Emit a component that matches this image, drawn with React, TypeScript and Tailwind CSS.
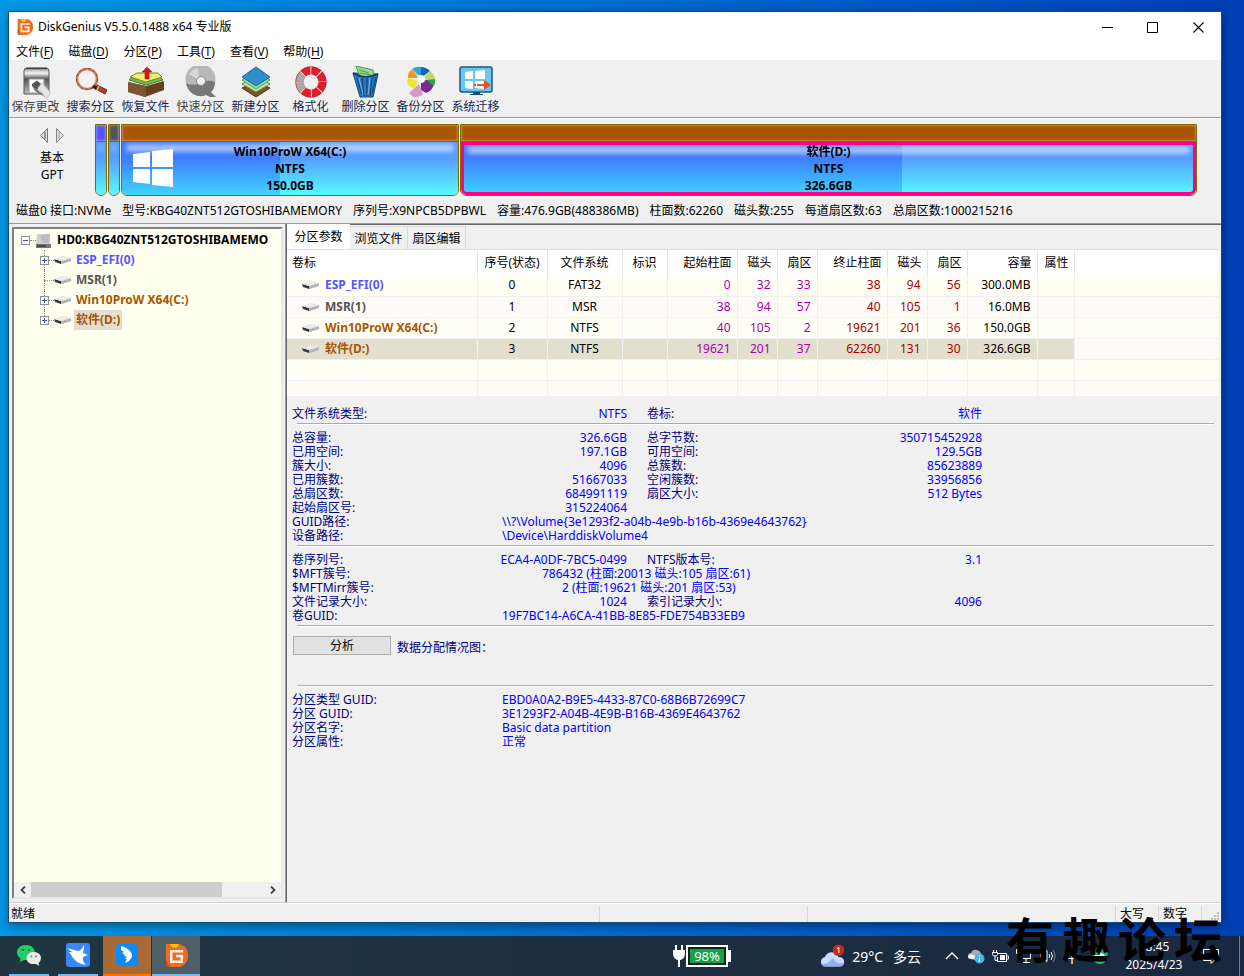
import type { ReactNode } from "react";
import clsx from "clsx";

type Cell = string | number;

type Volume = {
  name: string;
  color: string;
  cells: Cell[];
  expandable: boolean;
  selected?: boolean;
};

type Detail = {
  label: string;
  value: string;
  label2?: string;
  value2?: string;
  wide?: string;
};

const menus = [
  ["文件", "F"],
  ["磁盘", "D"],
  ["分区", "P"],
  ["工具", "T"],
  ["查看", "V"],
  ["帮助", "H"]
];

const diskInfo = [
  "磁盘0 接口:NVMe",
  "型号:KBG40ZNT512GTOSHIBAMEMORY",
  "序列号:X9NPCB5DPBWL",
  "容量:476.9GB(488386MB)",
  "柱面数:62260",
  "磁头数:255",
  "每道扇区数:63",
  "总扇区数:1000215216"
];

const volumes: Volume[] = [
  {
    name: "ESP_EFI(0)",
    color: "text-[#5555ff]",
    cells: [0, "FAT32", "", 0, 32, 33, 38, 94, 56, "300.0MB", ""],
    expandable: true
  },
  {
    name: "MSR(1)",
    color: "text-[#555555]",
    cells: [1, "MSR", "", 38, 94, 57, 40, 105, 1, "16.0MB", ""],
    expandable: false
  },
  {
    name: "Win10ProW X64(C:)",
    color: "text-[#aa5500]",
    cells: [2, "NTFS", "", 40, 105, 2, 19621, 201, 36, "150.0GB", ""],
    expandable: true
  },
  {
    name: "软件(D:)",
    color: "text-[#aa5500]",
    cells: [3, "NTFS", "", 19621, 201, 37, 62260, 131, 30, "326.6GB", ""],
    expandable: true,
    selected: true
  }
];

const columns = [
  { title: "卷标", width: "w-[190px]", align: "text-left" },
  { title: "序号(状态)", width: "w-[70px]", align: "text-center" },
  { title: "文件系统", width: "w-[75px]", align: "text-center" },
  { title: "标识", width: "w-[45px]", align: "text-center" },
  { title: "起始柱面", width: "w-[70px]", align: "text-right" },
  { title: "磁头", width: "w-[40px]", align: "text-right" },
  { title: "扇区", width: "w-[40px]", align: "text-right" },
  { title: "终止柱面", width: "w-[70px]", align: "text-right" },
  { title: "磁头", width: "w-[40px]", align: "text-right" },
  { title: "扇区", width: "w-[40px]", align: "text-right" },
  { title: "容量", width: "w-[70px]", align: "text-right" },
  { title: "属性", width: "w-[37px]", align: "text-right" }
];

const fsDetails: Detail[] = [
  { label: "总容量:", value: "326.6GB", label2: "总字节数:", value2: "350715452928" },
  { label: "已用空间:", value: "197.1GB", label2: "可用空间:", value2: "129.5GB" },
  { label: "簇大小:", value: "4096", label2: "总簇数:", value2: "85623889" },
  { label: "已用簇数:", value: "51667033", label2: "空闲簇数:", value2: "33956856" },
  { label: "总扇区数:", value: "684991119", label2: "扇区大小:", value2: "512 Bytes" },
  { label: "起始扇区号:", value: "315224064" },
  { label: "GUID路径:", value: "\\\\?\\Volume{3e1293f2-a04b-4e9b-b16b-4369e4643762}", wide: "pl-0" },
  { label: "设备路径:", value: "\\Device\\HarddiskVolume4", wide: "pl-0" }
];

const ntfsDetails: Detail[] = [
  { label: "卷序列号:", value: "ECA4-A0DF-7BC5-0499", label2: "NTFS版本号:", value2: "3.1" },
  { label: "$MFT簇号:", value: "786432 (柱面:20013 磁头:105 扇区:61)", wide: "pl-10" },
  { label: "$MFTMirr簇号:", value: "2 (柱面:19621 磁头:201 扇区:53)", wide: "pl-[60px]" },
  { label: "文件记录大小:", value: "1024", label2: "索引记录大小:", value2: "4096" },
  { label: "卷GUID:", value: "19F7BC14-A6CA-41BB-8E85-FDE754B33EB9", wide: "pl-0" }
];

const partitionDetails: Detail[] = [
  { label: "分区类型 GUID:", value: "EBD0A0A2-B9E5-4433-87C0-68B6B72699C7", wide: "pl-0" },
  { label: "分区 GUID:", value: "3E1293F2-A04B-4E9B-B16B-4369E4643762", wide: "pl-0" },
  { label: "分区名字:", value: "Basic data partition", wide: "pl-0" },
  { label: "分区属性:", value: "正常", wide: "pl-0" }
];

function GeniusLogo({ className }: { className?: string }) {
  return (
    <svg viewBox="0 0 24 24" className={className} aria-hidden="true">
      <path d="M1 0H14C20 1 24 5 24 11V14C23 20 19 24 13 24H4C2 24 1 23 1 20Z" fill="#ee6b23" />
      <path d="M5 0H15L12 4H8Z" fill="#ffc107" />
      <path d="M1 15L5 24H4C2 24 1 23 1 20Z" fill="#d9480f" />
      <path d="M19 7.500H6.500V18.500H17.500V12.500H11.500" fill="none" stroke="#fff2e4" strokeWidth="2.600" />
    </svg>
  );
}

function SaveIcon() {
  return (
    <svg viewBox="0 0 32 32" className="size-8">
      <defs>
        <linearGradient id="steel" x1="0" y1="0" x2="0" y2="1">
          <stop offset="0" stopColor="#999" />
          <stop offset="0.200" stopColor="#f4f4f4" />
          <stop offset="0.420" stopColor="#555" />
          <stop offset="0.700" stopColor="#888" />
          <stop offset="1" stopColor="#c4c4c4" />
        </linearGradient>
      </defs>
      <path d="M4 5Q4 2 7 2H26Q29 2 29 5V28H4Z" fill="url(#steel)" stroke="#555" />
      <path d="M6 2.500H27" stroke="#444" strokeWidth="1.500" />
      <path d="M9 13H24V27H9Z" fill="#fafafa" stroke="#999" />
      <path d="M12 18L17 14.500L21 18L17 24L12 20Z" fill="#555" />
      <path d="M18 22L22 17L31 27L28 31H25Z" fill="#e6e6e6" stroke="#aaa" strokeWidth="0.500" />
      <path d="M12 20L18 24L25 31L15 25Z" fill="#777" />
    </svg>
  );
}

function SearchIcon() {
  return (
    <svg viewBox="0 0 32 32" className="size-8">
      <circle cx="12" cy="13" r="10" fill="#f3f3f3" stroke="#c87c5c" strokeWidth="2.500" />
      <circle cx="12" cy="13" r="10.500" fill="none" stroke="#7b3f26" strokeWidth="0.800" strokeDasharray="3 2" />
      <path d="M18 20L22 23" stroke="#222" strokeWidth="3" />
      <path d="M22 19L32 24L30 28L21 23Z" fill="#a5472f" stroke="#632716" />
      <path d="M24 20L22 24" stroke="#e8a58d" strokeWidth="1.500" />
    </svg>
  );
}

function RestoreIcon() {
  return (
    <svg viewBox="0 0 38 32" className="h-8 w-[38px]">
      <path d="M1 16L19 20L37 15V24L18 31L1 26Z" fill="#65401f" />
      <path d="M1 16L19 20V31L1 26Z" fill="#7e5532" />
      <path d="M2 14L9 9H31L36 14L19 19Z" fill="#72bd4a" stroke="#3d7e25" />
      <path d="M3 11L10 7H31L35 11L19 16Z" fill="#f1ef6b" stroke="#648b35" />
      <path d="M18 13V6H15L20 1L25 6H22V13Z" fill="#dc171c" stroke="#a40b10" strokeWidth="0.500" />
    </svg>
  );
}

function QuickIcon() {
  return (
    <svg viewBox="0 0 32 32" className="size-8">
      <path d="M1 17A15 15 0 1 1 30 17Q23 13 16 17Q8 20 1 17Z" fill="#b8b8b8" />
      <path d="M1 17Q8 20 15 17Q23 13 30 16Q30 23 26 26L31 31H25L21 29Q15 32 8 28Q2 24 1 17Z" fill="#787878" />
      <path d="M14 14L4 8Q8 3 13 2Z" fill="#d8d8d8" />
      <circle cx="16" cy="15" r="4.500" fill="#eee" stroke="#888" />
    </svg>
  );
}

function LayersIcon() {
  return (
    <svg viewBox="0 0 32 32" className="size-8">
      <path d="M2 22L16 15L30 22L16 31Z" fill="#80502d" stroke="#5d351a" />
      <path d="M2 18L16 10L30 18L16 26Z" fill="#b6eaa3" stroke="#559648" />
      <path d="M2 14L16 6L30 14L16 23Z" fill="#9edb90" stroke="#55a054" />
      <path d="M2 11L16 1L30 11L16 20Z" fill="#2e8fcd" stroke="#1868a5" />
    </svg>
  );
}

function FormatIcon() {
  return (
    <svg viewBox="0 0 32 32" className="size-8" fill="none" strokeWidth="8">
      <circle cx="16" cy="16" r="11.500" stroke="#fff" />
      <circle cx="16" cy="16" r="11.500" stroke="#dd1f2d" strokeDasharray="8.200 0.830" />
      <circle cx="16" cy="16" r="11.500" stroke="#aaa" strokeDasharray="8.200 0.830 8.200 80" strokeDashoffset="-27.100" />
      <circle cx="16" cy="16" r="15.300" stroke="#9b2630" strokeWidth="0.500" />
    </svg>
  );
}

function TrashIcon() {
  return (
    <svg viewBox="0 0 32 32" className="size-8">
      <path d="M3 7L28 8L23 31H10Z" fill="#2c78bd" stroke="#174779" />
      <path d="M6 0L23 4L24 8L20 11H10Z" fill="#9bda8d" stroke="#4b9950" />
      <path d="M9 4L19 7M10 7L21 9" stroke="#539c56" />
      <path d="M3 7Q15 14 28 8" fill="none" stroke="#123e69" strokeWidth="1.500" />
      <path d="M7 12L12 29M12 12L14 30M17 12L17 30M22 12L20 30M26 11L22 28" stroke="#143e70" />
      <path d="M9 12L13 29M20 12L18 29" stroke="#76b6e6" />
    </svg>
  );
}

function BackupIcon() {
  return (
    <svg viewBox="0 0 32 32" className="size-8">
      <path d="M16 12L7 3Q11 0 16 1Z" fill="#24a9df" />
      <path d="M16 12V1Q21 1 25 5Z" fill="#1265ae" />
      <path d="M17 13L25 5Q29 8 30 13Z" fill="#b6d970" />
      <path d="M18 14L30 13Q31 18 27 22Z" fill="#20a64b" />
      <path d="M16 17L22 14L28 20Q27 25 21 27L16 24Z" fill="#7d278f" />
      <path d="M14 18L18 28Q14 32 8 31L4 27Z" fill="#d69bc7" />
      <path d="M13 15L10 22Q4 22 2 16L3 12Z" fill="#ece52a" />
      <path d="M14 12L3 12Q2 7 7 3Z" fill="#f39a24" />
      <circle cx="16" cy="13" r="4" fill="#fff" />
    </svg>
  );
}

function MigrateIcon() {
  return (
    <svg viewBox="0 0 34 32" className="h-8 w-[34px]">
      <rect x="1" y="1" width="32" height="25" rx="2" fill="#6ac8ef" stroke="#1b587e" strokeWidth="1.500" />
      <path d="M6 6L14 5V13H6ZM16 5L26 4V13H16ZM6 15H14V23L6 22ZM16 15H26V23L16 22Z" fill="#fff" />
      <path d="M14 26H21V28H24V29H11V28H14Z" fill="#174f72" />
      <path d="M15 18H17V20H15ZM18 18H25V14L32 19L25 24V20H18Z" fill="#ed4d22" />
    </svg>
  );
}

const tools = [
  { label: "保存更改", icon: <SaveIcon />, disabled: true },
  { label: "搜索分区", icon: <SearchIcon /> },
  { label: "恢复文件", icon: <RestoreIcon /> },
  { label: "快速分区", icon: <QuickIcon />, disabled: true },
  { label: "新建分区", icon: <LayersIcon /> },
  { label: "格式化", icon: <FormatIcon /> },
  { label: "删除分区", icon: <TrashIcon /> },
  { label: "备份分区", icon: <BackupIcon /> },
  { label: "系统迁移", icon: <MigrateIcon /> }
];

function DriveIcon() {
  return (
    <svg viewBox="0 0 17 10" className="h-2.5 w-[17px] shrink-0" aria-hidden="true">
      <path d="M0 4L7 6V9L1 7Z" fill="#343d36" />
      <path d="M7 6L17 3V6L8 9H7Z" fill="#b4b4b4" />
      <path d="M0 4L9 1L17 3L7 6Z" fill="#e2e2e2" />
      <path d="M3 4L9 2L14 3L7 5Z" fill="#efefef" />
    </svg>
  );
}

function Expander({ open = false }: { open?: boolean }) {
  return (
    <svg viewBox="0 0 9 9" className="size-[9px] shrink-0" shapeRendering="crispEdges" aria-hidden="true">
      <rect x="0.500" y="0.500" width="8" height="8" fill="#fff" stroke="#919191" />
      <path d={open ? "M2 4.500H7" : "M2 4.500H7M4.500 2V7"} stroke="#3b54a3" />
    </svg>
  );
}

function TitleBar() {
  return (
    <header className="flex h-[30px] items-center bg-white pl-2">
      <GeniusLogo className="size-4" />
      <h1 className="ml-[5px] flex-1 text-[12px]">DiskGenius V5.5.0.1488 x64 专业版</h1>
      <button aria-label="最小化" className="flex h-full w-[45px] items-center justify-center">
        <svg viewBox="0 0 11 11" className="size-[11px]"><path d="M0 5.500H11" stroke="#000" /></svg>
      </button>
      <button aria-label="最大化" className="flex h-full w-[45px] items-center justify-center">
        <svg viewBox="0 0 11 11" className="size-[11px]"><path d="M.5 .5H10.500V10.500H.5Z" fill="none" stroke="#000" /></svg>
      </button>
      <button aria-label="关闭" className="flex h-full w-[46px] items-center justify-center">
        <svg viewBox="0 0 11 11" className="size-[11px]"><path d="M.5 .5L10.500 10.500M10.500 .5L.5 10.500" stroke="#000" strokeWidth="1.100" /></svg>
      </button>
    </header>
  );
}

function PartitionBlock({ head, lines, used, active, logo, className }: {
  head: string;
  lines: string[];
  used: string;
  active?: boolean;
  logo?: boolean;
  className: string;
}) {
  return (
    <div className={clsx("flex h-[72px] flex-col overflow-hidden rounded-b-md border border-[#806a00]", className)}>
      <div className={clsx("h-[17px] shrink-0 border-b border-[#806a00] shadow-[inset_1px_1px_2px_rgba(255,255,255,0.3),inset_-1px_-1px_2px_rgba(255,255,255,0.3)]", head)} />
      <div className="relative flex-1 overflow-hidden bg-linear-to-b from-[#579cff] from-30% to-[#55fbff]">
        <div className={clsx("absolute inset-y-0 left-0 bg-linear-to-b from-[#407cff] from-30% to-[#40d4ff]", used)} />
        <div className={clsx("absolute h-2 rounded-full bg-white/50 blur-[2px]", active ? "inset-x-1.5 top-1" : "inset-x-1 top-0.5")} />
        {active ? <div className="absolute inset-0 rounded-b-md border-3 border-[#ff0080]" /> : null}
        {logo ? (
          <svg viewBox="0 0 40 38" className="absolute top-[7px] left-[11px] h-[38px] w-10">
            <path d="M0 5L17 3V18H0ZM19 2L40 0V18H19ZM0 20H17V35L0 33ZM19 20H40V38L19 36Z" fill="#fff" />
          </svg>
        ) : null}
        <div className="relative pt-px text-center text-[12px] leading-[17px] font-bold">
          {lines.map((line) => <p key={line}>{line}</p>)}
        </div>
      </div>
    </div>
  );
}

function DiskMap() {
  return (
    <section className="border-t border-[#999] pt-1 shadow-[inset_0_1px_white]">
      <div className="flex h-[76px] pr-6">
        <div className="flex w-[86px] shrink-0 flex-col items-center pt-1.5 text-[12px] leading-[17px]">
          <div className="flex gap-2 pb-1.5">
            <button aria-label="上一个磁盘">
              <svg viewBox="0 0 8 15" className="h-[15px] w-2"><path d="M7.500 .5V14.500L.5 7.500Z" fill="#ddd" stroke="#777" /><path d="M5 4V11" stroke="#555" /></svg>
            </button>
            <button aria-label="下一个磁盘">
              <svg viewBox="0 0 8 15" className="h-[15px] w-2"><path d="M.5 .5V14.500L7.500 7.500Z" fill="#ddd" stroke="#888" /><path d="M3 4V11" stroke="#aaa" /></svg>
            </button>
          </div>
          <span>基本</span>
          <span>GPT</span>
        </div>
        <div className="flex flex-1 gap-px pt-0.5">
          <PartitionBlock head="bg-[#5555ff]" lines={[]} used="w-0" className="w-3" />
          <PartitionBlock head="bg-[#555555]" lines={[]} used="w-0" className="w-3" />
          <PartitionBlock head="bg-[#aa5500]" lines={["Win10ProW X64(C:)", "NTFS", "150.0GB"]} used="w-[47%]" logo className="flex-[337]" />
          <PartitionBlock head="bg-[#aa5500]" lines={["软件(D:)", "NTFS", "326.6GB"]} used="w-[60%]" active className="flex-[737]" />
        </div>
      </div>
      <p className="flex h-[25px] items-center gap-[11px] overflow-hidden pl-[7px] text-[12px] whitespace-nowrap">
        {diskInfo.map((item) => <span key={item}>{item}</span>)}
      </p>
    </section>
  );
}

function DiskTree() {
  return (
    <aside className="flex w-[277px] shrink-0 border-r border-[#999] py-[3px] pr-0.5 pl-[3px]">
      <div className="flex min-w-0 flex-1 flex-col border-2 border-t-[#808080] border-r-[#e8e8e8] border-b-[#e8e8e8] border-l-[#808080] bg-[#fffff0]">
        <div className="flex-1 overflow-hidden pt-px text-[12px] font-bold whitespace-nowrap">
          <div className="flex h-5 items-center pl-[7px]">
            <Expander open />
            <span className="w-1.5 border-t border-dotted border-[#888]" />
            <svg viewBox="0 0 15 15" className="size-[15px] shrink-0" aria-hidden="true">
              <path d="M1 1H14V11H0Z" fill="#cfcfcf" />
              <path d="M4 3L10 1H14L13 10H7Z" fill="#bcbcbc" />
              <path d="M0 11H15V15H0Z" fill="#777" />
              <path d="M1 12H10V14H1Z" fill="#4c4c4c" />
            </svg>
            <span className="ml-1.5">HD0:KBG40ZNT512GTOSHIBAMEMO</span>
          </div>
          <ul>
            {volumes.map((volume, index) => (
              <li key={volume.name} className="flex h-5 items-center pl-[26px]">
                <span className="relative flex h-full w-3.5 items-center">
                  <span className={clsx("absolute top-0 left-1 border-l border-dotted border-[#888]", index === volumes.length - 1 ? "h-2.5" : "h-5")} />
                  <span className="absolute top-2.5 left-1 w-2.5 border-t border-dotted border-[#888]" />
                  {volume.expandable ? <span className="relative"><Expander /></span> : null}
                </span>
                <DriveIcon />
                <span className={clsx("ml-[3px] px-0.5 leading-5", volume.color, volume.selected && "bg-[#e2dfcf]")}>{volume.name}</span>
              </li>
            ))}
          </ul>
        </div>
        <div className="flex h-[15px] bg-[#f0f0f0]">
          <button aria-label="向左滚动" className="flex w-[17px] items-center justify-center">
            <svg viewBox="0 0 6 8" className="h-2 w-1.5"><path d="M5 .5L1.500 4L5 7.500" fill="none" stroke="#444" strokeWidth="1.800" /></svg>
          </button>
          <div className="flex-1"><div className="h-full w-[82%] bg-[#cdcdcd]" /></div>
          <button aria-label="向右滚动" className="flex w-[17px] items-center justify-center">
            <svg viewBox="0 0 6 8" className="h-2 w-1.5"><path d="M1 .5L4.500 4L1 7.500" fill="none" stroke="#444" strokeWidth="1.800" /></svg>
          </button>
        </div>
      </div>
    </aside>
  );
}

// start position is purple, end position is dark red
function cellColor(index: number) {
  if (index >= 3 && index <= 5) return "text-[#aa00aa]";
  if (index >= 6 && index <= 8) return "text-[#aa0000]";
  return "text-black";
}

function VolumeTable() {
  return (
    <table className="w-full table-fixed border-collapse text-[12px] leading-[18px]">
      <thead>
        <tr className="h-[25px] bg-white">
          {columns.map((column, index) => (
            <th key={index} className={clsx("border-r border-[#e5e5e5] px-[5px] font-normal whitespace-nowrap", column.width, column.align)}>
              {column.title}
            </th>
          ))}
          <th />
        </tr>
      </thead>
      <tbody>
        {volumes.map((volume, row) => (
          <tr key={volume.name} className={clsx("h-[21px] border-b border-[#f0f0f0]", row % 2 ? "bg-[#fffcf8]" : "bg-[#fffff5]")}>
            <td className={clsx("border-r border-[#f0f0f0] pl-[15px] font-bold", volume.color, volume.selected && "bg-[#e2dfcf]")}>
              <span className="flex items-center gap-1.5"><DriveIcon />{volume.name}</span>
            </td>
            {volume.cells.map((cell, index) => (
              <td
                key={index}
                className={clsx("border-r border-[#f0f0f0] px-1.5", columns[index + 1].align, cellColor(index), volume.selected && "bg-[#e2dfcf]")}
              >
                {cell}
              </td>
            ))}
            <td />
          </tr>
        ))}
        <tr className="h-[21px] border-b border-[#f0f0f0] bg-[#fffff5]">
          {columns.map((_, index) => <td key={index} className="border-r border-[#f0f0f0]" />)}
          <td />
        </tr>
        <tr className="h-4 bg-[#fffcf8]">
          {columns.map((_, index) => <td key={index} className="border-r border-[#f0f0f0]" />)}
          <td />
        </tr>
      </tbody>
    </table>
  );
}

function DetailRow({ label, value, label2, value2, wide }: Detail) {
  if (wide) {
    return (
      <div className="flex">
        <dt className="w-[210px] shrink-0">{label}</dt>
        <dd className={clsx("text-[#0000ff]", wide)}>{value}</dd>
      </div>
    );
  }

  return (
    <div className="flex">
      <dt className="w-[120px] shrink-0">{label}</dt>
      <dd className="w-[215px] text-right text-[#0000ff]">{value}</dd>
      {label2 ? (
        <>
          <dt className="ml-5 w-[120px] shrink-0">{label2}</dt>
          <dd className="w-[215px] text-right text-[#0000ff]">{value2}</dd>
        </>
      ) : null}
    </div>
  );
}

function DetailGroup({ items, className }: { items: Detail[]; className?: string }) {
  return (
    <dl className={className}>
      {items.map((item) => <DetailRow key={item.label} {...item} />)}
    </dl>
  );
}

function Rule() {
  return <hr className="ml-[5px] h-0.5 border-t border-b border-t-[#aaa] border-b-white" />;
}

function Details() {
  return (
    <section className="pt-[11px] pr-[5px] pl-[5px] text-[12px] leading-[14px] whitespace-nowrap text-[#000080]">
      <DetailGroup items={[{ label: "文件系统类型:", value: "NTFS", label2: "卷标:", value2: "软件" }]} className="pb-0.5" />
      <Rule />
      <DetailGroup items={fsDetails} className="pt-1.5 pb-0.5" />
      <Rule />
      <DetailGroup items={ntfsDetails} className="pt-1.5 pb-0.5" />
      <Rule />
      <div className="flex h-[58px] items-start gap-1.5 pt-[9px] pl-px">
        <button className="h-[19px] w-[98px] border border-[#adadad] bg-[#e1e1e1] text-black">分析</button>
        <span className="pt-[5px]">数据分配情况图：</span>
      </div>
      <Rule />
      <DetailGroup items={partitionDetails} className="pt-1.5" />
    </section>
  );
}

function TaskItem({ label, className, children }: { label: string; className: string; children: ReactNode }) {
  return (
    <button aria-label={label} className={clsx("flex h-full items-center justify-center border-b-2", className)}>
      {children}
    </button>
  );
}

function TrayItem({ label, className = "w-6", children }: { label: string; className?: string; children: ReactNode }) {
  return (
    <button aria-label={label} className={clsx("flex h-full shrink-0 items-center justify-center text-white", className)}>
      {children}
    </button>
  );
}

function Taskbar() {
  return (
    <footer className="relative flex h-10 shrink-0 items-center bg-linear-to-r from-[#203640] to-[#192841] text-white">
      <TaskItem label="微信" className="ml-[9px] w-10 border-[#76b9ed]">
        <svg viewBox="0 0 24 22" className="h-[22px] w-6">
          <path d="M9 1C4 1 0 4 0 8.500C0 11 1.500 13 3.500 14.500L3 18L7 16Q17 17 18 9C18 4 14 1 9 1Z" fill="#21cf65" />
          <path d="M16.500 8C12 8 9.500 11 9.500 14C9.500 18 13 20.500 17 20H19L22 22L21.500 19Q24 17 24 14C24 10.500 21 8 16.500 8Z" fill="#e9e9e9" />
          <circle cx="6" cy="6" r="1.100" fill="#14572c" />
          <circle cx="12" cy="6" r="1.100" fill="#14572c" />
          <circle cx="14.500" cy="12.500" r="0.900" fill="#777" />
          <circle cx="19" cy="12.500" r="0.900" fill="#777" />
        </svg>
      </TaskItem>
      <TaskItem label="迅雷" className="ml-[9px] w-10 border-[#76b9ed]">
        <svg viewBox="0 0 24 24" className="size-6">
          <rect width="24" height="24" rx="3" fill="#3c86fb" />
          <path d="M1 5L12 8Q15 8 18 2Q18 6 17 10L22 12L17 14Q16 18 20 22Q12 21 8 16Q6 14 6 13L3 9H6Z" fill="#fff" />
        </svg>
      </TaskItem>
      <TaskItem label="钉钉" className="ml-[5px] w-12 border-[#ff7300] bg-[#a96a37]">
        <svg viewBox="0 0 24 24" className="size-6">
          <rect x="1" y="1" width="22" height="22" rx="4" fill="#078bfd" />
          <path d="M6 3Q14 5 17 11Q18 14 14 18L10 20L12 16H10L12 14L9 13L10 12L7 10L9 9L6 7Z" fill="#fff" />
        </svg>
      </TaskItem>
      <TaskItem label="DiskGenius" className="ml-px w-12 border-[#76b9ed] bg-[#4d6069]">
        <GeniusLogo className="size-[23px]" />
      </TaskItem>

      <div className="flex-1" />

      <div className="flex w-[60px] shrink-0 items-center">
        <svg viewBox="0 0 14 22" className="h-[22px] w-3.5" aria-hidden="true">
          <path d="M3 0H5V5H9V0H11V5H13V8Q13 14 8 15V22H6V15Q1 14 1 8V5H3Z" fill="#fff" />
        </svg>
        <div className="flex h-[22px] w-[42px] items-center justify-center border-2 border-white bg-[#17a04a] text-[13px] leading-none shadow-[inset_0_0_0_2px_#10251b]">98%</div>
        <span className="h-3 w-[3px] bg-white" />
      </div>
      <button className="ml-[89px] flex w-[100px] shrink-0 items-center gap-[7px] text-[14px] whitespace-nowrap">
        <svg viewBox="0 0 25 24" className="h-6 w-[25px]" aria-hidden="true">
          <path d="M5 23Q0 23 0 18Q0 14 4 13Q6 8 11 8Q16 8 18 13Q24 13 24 18Q24 23 19 23Z" fill="#c9dcff" />
          <path d="M1 20Q7 21 12 14Q16 21 24 19Q23 23 19 23H5Q1 23 1 20Z" fill="#8fb0ee" />
          <circle cx="18" cy="6" r="6" fill="#c42b1c" />
          <path d="M16.500 4.500L18.500 3V9" fill="none" stroke="#fff" />
        </svg>
        <span className="flex gap-2.5"><span>29°C</span><span>多云</span></span>
      </button>
      <TrayItem label="显示隐藏的图标" className="ml-[19px] w-6">
        <svg viewBox="0 0 14 8" className="h-2 w-3.5"><path d="M1 7L7 1L13 7" fill="none" stroke="#fff" strokeWidth="1.400" /></svg>
      </TrayItem>
      <TrayItem label="云同步">
        <svg viewBox="0 0 17 16" className="h-4 w-[17px]">
          <path d="M3 11Q0 11 0 8Q0 5 3 5Q5 1 9 2Q13 3 13 7L10 12Z" fill="#aaa" />
          <path d="M3 11Q0 11 0 8Q2 5 6 7L10 12Z" fill="#eee" />
          <circle cx="11.500" cy="10.500" r="5" fill="#43b5eb" />
          <path d="M11.500 10V13.500M11.500 7.500V8.500" stroke="#fff" strokeWidth="1.400" />
        </svg>
      </TrayItem>
      <TrayItem label="电源">
        <svg viewBox="0 0 17 14" className="h-3.5 w-[17px]" fill="none" stroke="#fff">
          <path d="M5 4.500H14.500V12.500H5.500V8M15 7H16.500V10H15M1.500 1V3M4.500 1V3M.5 3.500H5.500V5.500Q5.500 7 3 7Q.5 7 .5 5.500ZM3 7V11.500H5" />
          <path d="M8 6H13V11H8Z" fill="#fff" stroke="none" />
        </svg>
      </TrayItem>
      <TrayItem label="网络">
        <svg viewBox="0 0 16 16" className="size-4" fill="none" stroke="#fff">
          <path d="M6 2.500H14.500V10.500H6M10 11V14M6 14.500H14M.5 1.500H4.500V5.500H.5ZM2.500 5.500V14.500" />
        </svg>
      </TrayItem>
      <TrayItem label="音量">
        <svg viewBox="0 0 16 14" className="h-3.5 w-4" fill="none" stroke="#fff">
          <path d="M.5 5H3L7 1.500V12.500L3 9H.5ZM9 5Q10.500 7 9 9M11 3Q14 7 11 11" />
          <path d="M13 1Q17 7 13 13" stroke="#75808c" />
        </svg>
      </TrayItem>
      <TrayItem label="输入法"><span className="text-[14px]">中</span></TrayItem>
      <TrayItem label="同步助手" className="w-8">
        <svg viewBox="0 0 16 16" className="size-4">
          <circle cx="8" cy="8" r="8" fill="#12bd70" />
          <path d="M2 7H8V4L14 8L8 12V9H2Z" fill="#fff" />
        </svg>
      </TrayItem>
      <TrayItem label="时钟" className="w-[76px] flex-col text-[12px] leading-[18px]">
        <span>18:45</span>
        <span>2025/4/23</span>
      </TrayItem>
      <TrayItem label="通知" className="w-[38px]">
        <svg viewBox="0 0 16 16" className="size-4"><path d="M.5 1.500H15.500V12.500H11L8 15.500V12.500H.5Z" fill="none" stroke="#fff" /></svg>
      </TrayItem>
      <button aria-label="显示桌面" className="ml-[9px] h-full w-[5px] border-l border-[#75808c]" />

      <div className="pointer-events-none absolute right-[22px] bottom-2 flex gap-2 text-[48px] leading-[56px] font-bold text-black">
        <span>有</span>
        <span>趣</span>
        <span>论</span>
        <span>坛</span>
      </div>
    </footer>
  );
}

export default function App() {
  return (
    <div className="flex min-h-screen flex-col bg-linear-to-r from-[#0099e8] via-[#006bd0] via-50% to-[#003eb4] font-['Noto_Sans','Noto_Sans_CJK_SC',sans-serif] text-black">
      <main className="mt-[11px] mr-[22px] mb-[13px] ml-2 flex flex-1 flex-col border border-[#174a70] bg-[#f0f0f0] shadow-[0_3px_10px_rgba(0,0,0,0.4)]">
        <TitleBar />
        <nav className="flex h-[18px] items-end gap-[15px] bg-white pl-[7px] text-[12px] leading-4">
          {menus.map(([name, key]) => (
            <button key={key}>{name}(<u className="underline-offset-2">{key}</u>)</button>
          ))}
        </nav>
        <div className="flex h-[57px] gap-0.5 pt-1.5">
          {tools.map((tool) => (
            <button key={tool.label} className={clsx("flex w-[53px] flex-col items-center gap-px text-[12px] leading-4 whitespace-nowrap", tool.disabled ? "text-[#444]" : "text-[#14284f]")}>
              {tool.icon}
              <span>{tool.label}</span>
            </button>
          ))}
        </div>
        <DiskMap />
        <div className="flex flex-1 border-t border-[#999]">
          <DiskTree />
          <div className="min-w-0 flex-1 border-t border-l border-[#696969] pr-0.5">
            <div role="tablist" className="flex h-[25px] items-end border-b border-[#dcdcdc] text-[12px]">
              <button role="tab" aria-selected="true" className="h-[25px] w-[63px] bg-white">分区参数</button>
              <button role="tab" aria-selected="false" className="h-[23px] w-[58px] border-t border-r border-[#d9d9d9] pt-px">浏览文件</button>
              <button role="tab" aria-selected="false" className="h-[23px] w-[58px] border-t border-r border-[#d9d9d9] pt-px">扇区编辑</button>
            </div>
            <VolumeTable />
            <Details />
          </div>
        </div>
        <div className="flex h-5 items-center border-t border-[#d0d0d0] pt-0.5 text-[12px] shadow-[inset_0_1px_white]">
          <span className="w-[591px] border-r border-[#d7d7d7] pl-0.5 leading-4">就绪</span>
          <span className="h-4 w-52 border-r border-[#d7d7d7]" />
          <span className="h-4 flex-1 border-r border-[#d7d7d7]" />
          <span className="w-[43px] border-r border-[#d7d7d7] pl-1 leading-4">大写</span>
          <span className="w-[43px] border-r border-[#d7d7d7] pl-1 leading-4">数字</span>
          <svg viewBox="0 0 19 16" className="h-4 w-[19px]" aria-hidden="true">
            <path d="M15 6H17V8H15ZM12 9H14V11H12ZM15 9H17V11H15ZM9 12H11V14H9ZM12 12H14V14H12ZM15 12H17V14H15Z" fill="#bfbfbf" />
          </svg>
        </div>
      </main>
      <Taskbar />
    </div>
  );
}
